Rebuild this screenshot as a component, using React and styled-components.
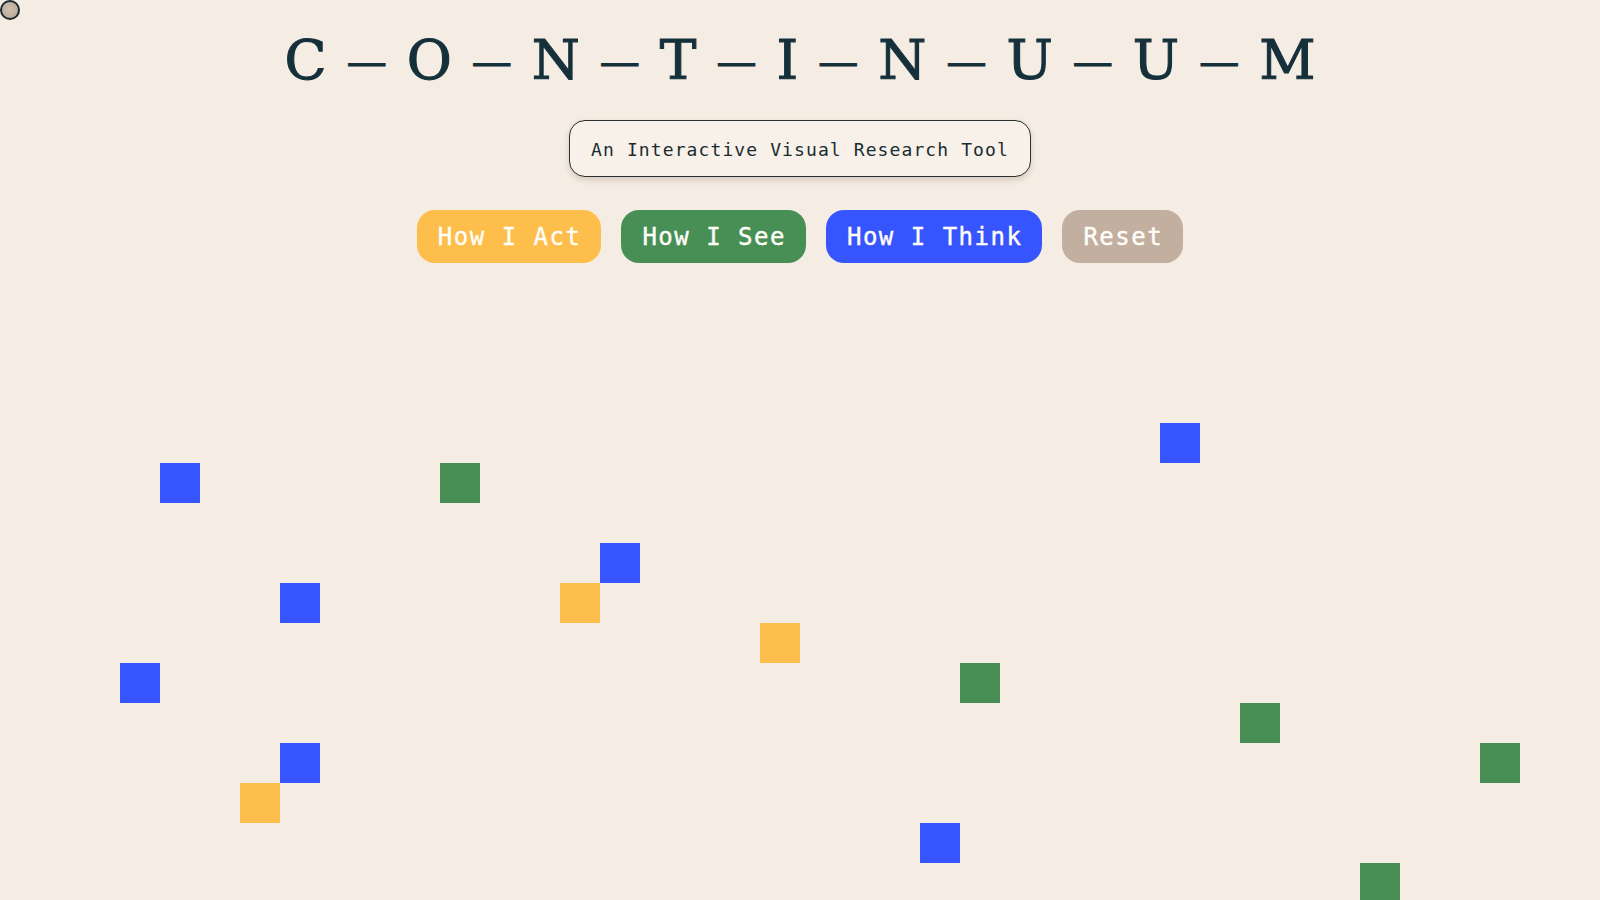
import React from "react";
import styled, { createGlobalStyle } from "styled-components";

const GlobalStyle = createGlobalStyle`
  html, body {
    margin: 0;
    padding: 0;
    background: #f5ede3;
  }
  body {
    font-family: "DejaVu Sans Mono", "Liberation Mono", monospace;
    overflow: hidden;
  }
`;

const Page = styled.div`
  position: relative;
  width: 100%;
  height: 100vh;
  overflow: hidden;
  background: #f5ede3;
`;

const Header = styled.header`
  display: flex;
  flex-direction: column;
  align-items: center;
  padding-top: 33px;
`;

const Title = styled.h1`
  display: flex;
  align-items: center;
  gap: 20px;
  margin: 0;
  font-family: "DejaVu Serif", "Liberation Serif", serif;
  font-weight: 400;
  color: #15303a;
  -webkit-text-stroke: 1.1px #15303a;
`;

const Letter = styled.span`
  font-size: 55px;
  line-height: 1;
`;

const Dash = styled.span`
  font-size: 40px;
  line-height: 1;
`;

const Subtitle = styled.div`
  margin-top: 32px;
  padding: 18px 21px 16px;
  border: 1px solid #2b2f30;
  border-radius: 16px;
  background: #f7f1e9;
  box-shadow: 0 3px 6px rgba(60, 40, 20, 0.18);
  font-size: 18px;
  line-height: 21px;
  letter-spacing: 1.1px;
  color: #1b2b30;
`;

const ButtonRow = styled.nav`
  display: flex;
  gap: 20px;
  margin-top: 33px;
`;

const Button = styled.button`
  border: none;
  border-radius: 18px;
  padding: 13px 20px 12px 21px;
  background: ${(p) => p.$bg};
  color: #fffdf8;
  font-family: "DejaVu Sans Mono", "Liberation Mono", monospace;
  font-size: 24px;
  line-height: 28px;
  letter-spacing: 1.5px;
  -webkit-text-stroke: 0.4px #fffdf8;
  cursor: pointer;
`;

const Cursor = styled.div`
  position: absolute;
  left: 0;
  top: 0;
  width: 16px;
  height: 16px;
  border: 2px solid #1d2a2e;
  border-radius: 50%;
  background: radial-gradient(circle at 45% 45%, #d2bfae, #b4a698);
`;

const Tile = styled.div`
  position: absolute;
  width: 40px;
  height: 40px;
  background: ${(p) => p.$color};
`;

const COLORS = {
  act: "#fdbe4b",
  see: "#488f55",
  think: "#3755fe",
  reset: "#c3afa0",
};

const TITLE = ["C", "O", "N", "T", "I", "N", "U", "U", "M"];

const tiles = [
  { x: 160, y: 463, c: "think" },
  { x: 440, y: 463, c: "see" },
  { x: 1160, y: 423, c: "think" },
  { x: 600, y: 543, c: "think" },
  { x: 560, y: 583, c: "act" },
  { x: 280, y: 583, c: "think" },
  { x: 760, y: 623, c: "act" },
  { x: 120, y: 663, c: "think" },
  { x: 960, y: 663, c: "see" },
  { x: 1240, y: 703, c: "see" },
  { x: 280, y: 743, c: "think" },
  { x: 1480, y: 743, c: "see" },
  { x: 240, y: 783, c: "act" },
  { x: 920, y: 823, c: "think" },
  { x: 1360, y: 863, c: "see" },
];

export default function App() {
  return (
    <>
      <GlobalStyle />
      <Page>
        <Header>
          <Title>
            {TITLE.map((ch, i) => (
              <React.Fragment key={i}>
                {i > 0 && <Dash>—</Dash>}
                <Letter>{ch}</Letter>
              </React.Fragment>
            ))}
          </Title>
          <Subtitle>An Interactive Visual Research Tool</Subtitle>
          <ButtonRow>
            <Button $bg={COLORS.act}>How I Act</Button>
            <Button $bg={COLORS.see}>How I See</Button>
            <Button $bg={COLORS.think}>How I Think</Button>
            <Button $bg={COLORS.reset}>Reset</Button>
          </ButtonRow>
        </Header>
        {tiles.map((t, i) => (
          <Tile
            key={i}
            $color={COLORS[t.c]}
            style={{ left: t.x, top: t.y + 0.33 }}
          />
        ))}
        <Cursor />
      </Page>
    </>
  );
}
